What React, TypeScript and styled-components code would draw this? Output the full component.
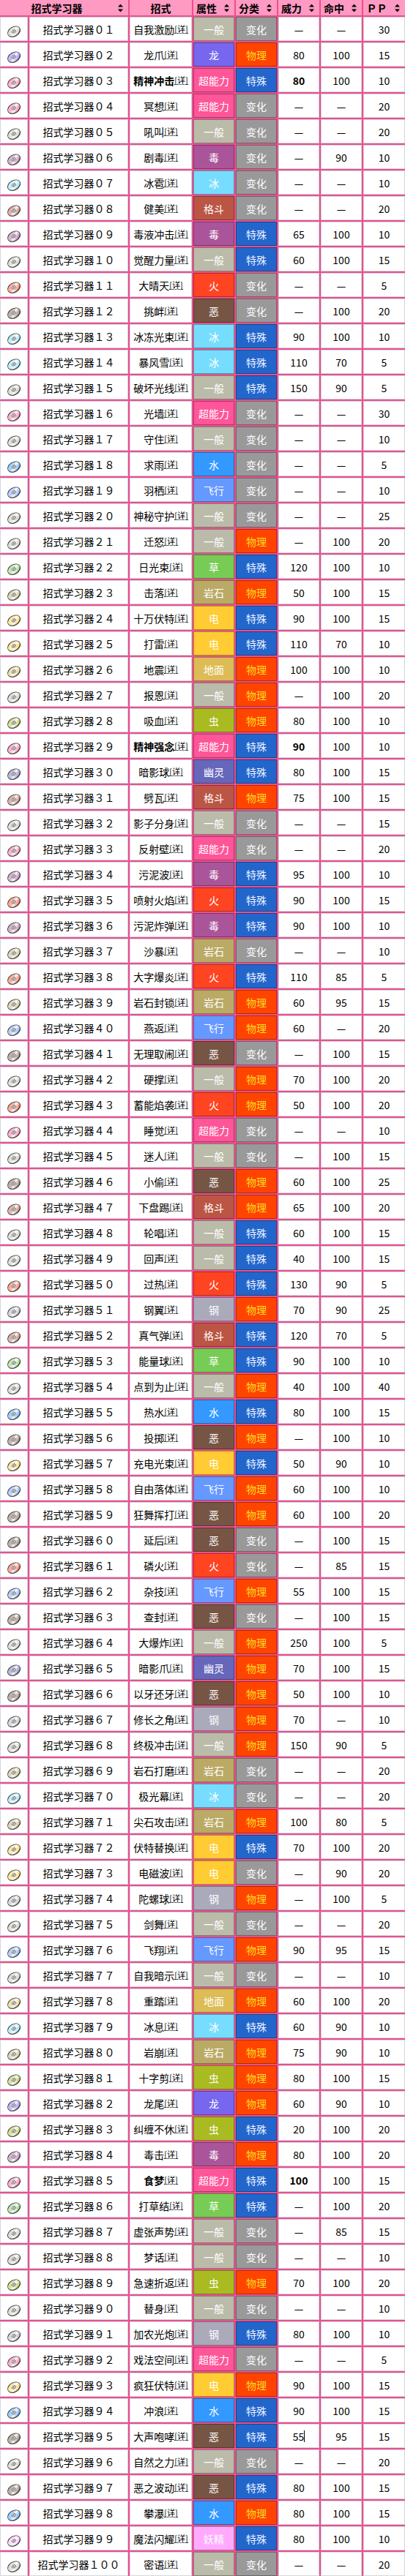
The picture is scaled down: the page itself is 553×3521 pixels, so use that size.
import React from 'react';
import styled, { createGlobalStyle } from 'styled-components';

const GlobalStyle = createGlobalStyle`
  html, body {
    margin: 0;
    padding: 0;
    background: #fff;
    overflow-x: hidden;
  }
  body {
    font-family: 'Noto Sans CJK SC', 'Noto Sans', sans-serif;
    font-size: 14px;
    color: #000;
  }
`;

const COLS = '38px 135px 85px 56px 56px 56px 56px 57px';

const TYPE_COLORS: Record<string, string> = {
  一般: '#bbbbaa',
  火: '#ff4422',
  水: '#3399ff',
  草: '#77cc55',
  电: '#ffcc33',
  冰: '#77ddff',
  格斗: '#bb5544',
  毒: '#aa5599',
  地面: '#ddbb55',
  飞行: '#6699ff',
  超能力: '#ff5599',
  虫: '#aabb22',
  岩石: '#bbaa66',
  幽灵: '#6666bb',
  龙: '#7766ee',
  恶: '#775544',
  钢: '#aaaabb',
  妖精: '#ffaaff',
};

const CATEGORY: Record<string, { bg: string; fg: string }> = {
  物理: { bg: '#ff4400', fg: '#ffdd22' },
  特殊: { bg: '#2266cc', fg: '#eef4ff' },
  变化: { bg: '#999999', fg: '#ffffff' },
};

// name,type,category,power,accuracy,pp   (* = bold)
const DATA = `自我激励,一般,变化,—,—,30
龙爪,龙,物理,80,100,15
*精神冲击,超能力,特殊,80,100,10
冥想,超能力,变化,—,—,20
吼叫,一般,变化,—,—,20
剧毒,毒,变化,—,90,10
冰雹,冰,变化,—,—,10
健美,格斗,变化,—,—,20
毒液冲击,毒,特殊,65,100,10
觉醒力量,一般,特殊,60,100,15
大晴天,火,变化,—,—,5
挑衅,恶,变化,—,100,20
冰冻光束,冰,特殊,90,100,10
暴风雪,冰,特殊,110,70,5
破坏光线,一般,特殊,150,90,5
光墙,超能力,变化,—,—,30
守住,一般,变化,—,—,10
求雨,水,变化,—,—,5
羽栖,飞行,变化,—,—,10
神秘守护,一般,变化,—,—,25
迁怒,一般,物理,—,100,20
日光束,草,特殊,120,100,10
击落,岩石,物理,50,100,15
十万伏特,电,特殊,90,100,15
打雷,电,特殊,110,70,10
地震,地面,物理,100,100,10
报恩,一般,物理,—,100,20
吸血,虫,物理,80,100,10
*精神强念,超能力,特殊,90,100,10
暗影球,幽灵,特殊,80,100,15
劈瓦,格斗,物理,75,100,15
影子分身,一般,变化,—,—,15
反射壁,超能力,变化,—,—,20
污泥波,毒,特殊,95,100,10
喷射火焰,火,特殊,90,100,15
污泥炸弹,毒,特殊,90,100,10
沙暴,岩石,变化,—,—,10
大字爆炎,火,特殊,110,85,5
岩石封锁,岩石,物理,60,95,15
燕返,飞行,物理,60,—,20
无理取闹,恶,变化,—,100,15
硬撑,一般,物理,70,100,20
蓄能焰袭,火,物理,50,100,20
睡觉,超能力,变化,—,—,10
迷人,一般,变化,—,100,15
小偷,恶,物理,60,100,25
下盘踢,格斗,物理,65,100,20
轮唱,一般,特殊,60,100,15
回声,一般,特殊,40,100,15
过热,火,特殊,130,90,5
钢翼,钢,物理,70,90,25
真气弹,格斗,特殊,120,70,5
能量球,草,特殊,90,100,10
点到为止,一般,物理,40,100,40
热水,水,特殊,80,100,15
投掷,恶,物理,—,100,10
充电光束,电,特殊,50,90,10
自由落体,飞行,物理,60,100,10
狂舞挥打,恶,物理,60,100,20
延后,恶,变化,—,100,15
磷火,火,变化,—,85,15
杂技,飞行,物理,55,100,15
查封,恶,变化,—,100,15
大爆炸,一般,物理,250,100,5
暗影爪,幽灵,物理,70,100,15
以牙还牙,恶,物理,50,100,10
修长之角,钢,物理,70,—,10
终极冲击,一般,物理,150,90,5
岩石打磨,岩石,变化,—,—,20
极光幕,冰,变化,—,—,20
尖石攻击,岩石,物理,100,80,5
伏特替换,电,特殊,70,100,20
电磁波,电,变化,—,90,20
陀螺球,钢,物理,—,100,5
剑舞,一般,变化,—,—,20
飞翔,飞行,物理,90,95,15
自我暗示,一般,变化,—,—,10
重踏,地面,物理,60,100,20
冰息,冰,特殊,60,90,10
岩崩,岩石,物理,75,90,10
十字剪,虫,物理,80,100,15
龙尾,龙,物理,60,90,10
纠缠不休,虫,特殊,20,100,20
毒击,毒,物理,80,100,20
*食梦,超能力,特殊,100,100,15
打草结,草,特殊,—,100,20
虚张声势,一般,变化,—,85,15
梦话,一般,变化,—,—,10
急速折返,虫,物理,70,100,20
替身,一般,变化,—,—,10
加农光炮,钢,特殊,80,100,10
戏法空间,超能力,变化,—,—,5
疯狂伏特,电,物理,90,100,15
冲浪,水,特殊,90,100,15
大声咆哮,恶,特殊,55,95,15
自然之力,一般,变化,—,—,20
恶之波动,恶,特殊,80,100,15
攀瀑,水,物理,80,100,15
魔法闪耀,妖精,特殊,80,100,10
密语,一般,变化,—,—,20`;

interface Move {
  no: number;
  name: string;
  bold: boolean;
  type: string;
  category: string;
  power: string;
  accuracy: string;
  pp: string;
}

const moves: Move[] = DATA.split('\n').map((line, i) => {
  const [rawName, type, category, power, accuracy, pp] = line.split(',');
  const bold = rawName.startsWith('*');
  return {
    no: i + 1,
    name: bold ? rawName.slice(1) : rawName,
    bold,
    type,
    category,
    power,
    accuracy,
    pp,
  };
});

const darken = (hex: string, f = 0.68) => {
  const n = parseInt(hex.slice(1), 16);
  const r = Math.round(((n >> 16) & 255) * f);
  const g = Math.round(((n >> 8) & 255) * f);
  const b = Math.round((n & 255) * f);
  return `rgb(${r}, ${g}, ${b})`;
};

const fullWidth = (s: string) =>
  s.replace(/[0-9]/g, (c) => String.fromCharCode(c.charCodeAt(0) + 0xfee0));

const Table = styled.div`
  display: flex;
  flex-direction: column;
  gap: 2px;
  width: 557px;
  margin: -2px 0 0 -2px;
  padding: 2px;
  box-sizing: border-box;
  background: #ee4d8e;
`;

const Row = styled.div<{ $head?: boolean }>`
  display: grid;
  grid-template-columns: ${COLS};
  column-gap: 2px;
  height: ${(p) => (p.$head ? 21 : 33)}px;
`;

const HeadCell = styled.div<{ $span?: number; $sort?: boolean }>`
  grid-column: span ${(p) => p.$span || 1};
  position: relative;
  display: flex;
  align-items: center;
  justify-content: center;
  padding-right: ${(p) => (p.$sort ? '20px' : '0')};
  background: #ff9ac2;
  font-weight: bold;
  font-size: 14px;
  line-height: 1;
`;

const SortIcon = styled.svg`
  position: absolute;
  right: 7px;
  top: 50%;
  transform: translateY(-50%);
`;

const Cell = styled.div<{ $bold?: boolean }>`
  display: flex;
  align-items: center;
  justify-content: center;
  box-sizing: border-box;
  background: #fff;
  border: 1px solid #d2d8e0;
  font-size: 14px;
  font-weight: ${(p) => (p.$bold ? 'bold' : 'normal')};
  white-space: nowrap;
  line-height: 1;
`;

const IconCell = styled(Cell)`
  svg {
    margin-top: 6px;
  }
`;

const ColorCell = styled.div<{ $bg: string; $fg: string }>`
  display: flex;
  align-items: center;
  justify-content: center;
  box-sizing: border-box;
  background: ${(p) => p.$bg};
  border: 1px solid ${(p) => darken(p.$bg)};
  color: ${(p) => p.$fg};
  font-size: 14px;
  line-height: 1;
  white-space: nowrap;
`;

const Detail = styled.sup`
  font-size: 11px;
  line-height: 1;
  font-weight: normal;
  border-bottom: 1px dotted #000;
  vertical-align: 6px;
`;

const Caret = styled.span`
  display: inline-block;
  width: 1px;
  height: 16px;
  background: #000;
`;

function Disc({ id, tint }: { id: string; tint: string }) {
  return (
    <svg width="22" height="20" viewBox="0 0 22 20">
      <defs>
        <linearGradient id={id} x1="0" y1="0" x2="1" y2="1">
          <stop offset="0" stopColor="#ffffff" />
          <stop offset="0.3" stopColor={tint} stopOpacity="0.45" />
          <stop offset="0.55" stopColor="#ffffff" />
          <stop offset="0.8" stopColor={tint} stopOpacity="0.6" />
          <stop offset="1" stopColor="#bbbbbb" />
        </linearGradient>
      </defs>
      <g transform="rotate(-32 11 10)">
        <ellipse cx="11" cy="11" rx="9.2" ry="6.2" fill="#444" />
        <ellipse cx="11" cy="10" rx="9.2" ry="6.2" fill="#fff" />
        <ellipse cx="11" cy="10" rx="9.2" ry="6.2" fill={`url(#${id})`} stroke="#333" strokeWidth="0.9" />
        <ellipse cx="11" cy="10" rx="2.8" ry="1.9" fill="#f4f4f4" stroke="#555" strokeWidth="0.8" />
        <ellipse cx="11" cy="10" rx="1" ry="0.65" fill="#333" />
      </g>
    </svg>
  );
}

function Sort() {
  return (
    <SortIcon width="7" height="11" viewBox="0 0 7 11">
      <path d="M3.5 0 L7 4 L0 4 Z" fill="#000" />
      <path d="M0 7 L7 7 L3.5 11 Z" fill="#000" />
    </SortIcon>
  );
}

export default function App() {
  return (
    <>
      <GlobalStyle />
      <Table>
        <Row $head>
          <HeadCell $span={2} $sort>
            招式学习器
            <Sort />
          </HeadCell>
          <HeadCell>招式</HeadCell>
          <HeadCell $sort>
            属性
            <Sort />
          </HeadCell>
          <HeadCell $sort>
            分类
            <Sort />
          </HeadCell>
          <HeadCell $sort>
            威力
            <Sort />
          </HeadCell>
          <HeadCell $sort>
            命中
            <Sort />
          </HeadCell>
          <HeadCell $sort>
            ＰＰ
            <Sort />
          </HeadCell>
        </Row>
        {moves.map((m) => {
          const tc = TYPE_COLORS[m.type];
          const cat = CATEGORY[m.category];
          return (
            <Row key={m.no}>
              <IconCell>
                <Disc id={`disc-${m.no}`} tint={tc} />
              </IconCell>
              <Cell>招式学习器{fullWidth(String(m.no).padStart(2, '0'))}</Cell>
              <Cell $bold={m.bold}>
                {m.name}
                <Detail>[详]</Detail>
              </Cell>
              <ColorCell $bg={tc} $fg="#ffffff">
                {m.type}
              </ColorCell>
              <ColorCell $bg={cat.bg} $fg={cat.fg}>
                {m.category}
              </ColorCell>
              <Cell $bold={m.bold}>
                {m.power}
                {m.no === 95 ? <Caret /> : null}
              </Cell>
              <Cell>{m.accuracy}</Cell>
              <Cell>{m.pp}</Cell>
            </Row>
          );
        })}
      </Table>
    </>
  );
}
